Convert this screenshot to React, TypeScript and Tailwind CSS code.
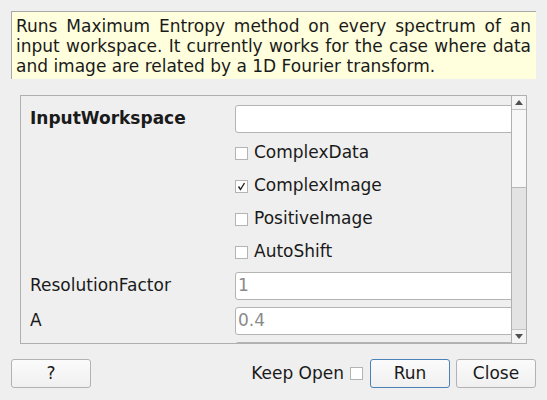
import React from "react";

const font = { fontFamily: '"DejaVu Sans", "Liberation Sans", sans-serif' };

function TextRow({ label, bold, value }: { label: string; bold?: boolean; value?: string }) {
  return (
    <div className="flex items-center h-[28px] shrink-0">
      <div className={`w-[205px] shrink-0 ${bold ? "font-bold" : ""}`}>{label}</div>
      <div className="h-[28px] w-[290px] shrink-0 bg-white border border-[#b4b4b4] rounded-[3px] flex items-center pl-[2px] text-[#8a8a8a]">
        {value}
      </div>
    </div>
  );
}

function CheckRow({ label, checked }: { label: string; checked?: boolean }) {
  return (
    <div className="flex items-center h-[26px] shrink-0">
      <div className="w-[205px] shrink-0" />
      <div className="w-[13px] h-[13px] bg-white border border-[#b4b4b4] flex items-center justify-center shrink-0">
        {checked && (
          <svg width="9" height="9" viewBox="0 0 9 9">
            <path d="M1.5 4.5 L3.5 7.5 L7.5 1" fill="none" stroke="#222" strokeWidth="1.4" />
          </svg>
        )}
      </div>
      <div className="ml-[6px]">{label}</div>
    </div>
  );
}

export default function App() {
  return (
    <div className="w-[547px] h-[400px] bg-[#efefef] text-[17px] text-[#1a1a1a] overflow-hidden relative" style={font}>
      <div className="pt-[11px] pl-[11px]">
        <div className="w-[525px] h-[68px] bg-[#ffffdd] border-t border-l border-[#a8a8a8] pt-[4px] pl-[4px] pr-[5px] leading-[20px] text-justify text-[17px]">
          Runs Maximum Entropy method on every spectrum of an input workspace. It currently works for the case where data and image are related by a 1D Fourier transform.
        </div>
      </div>
      <div className="mt-[16px] ml-[20px] w-[507px] h-[249px] border border-[#b0b0b0] flex overflow-hidden">
        <div className="flex-1 overflow-hidden pl-[9px] pt-[9px] flex flex-col gap-[7px]">
          <TextRow label="InputWorkspace" bold />
          <CheckRow label="ComplexData" />
          <CheckRow label="ComplexImage" checked />
          <CheckRow label="PositiveImage" />
          <CheckRow label="AutoShift" />
          <TextRow label="ResolutionFactor" value="1" />
          <TextRow label="A" value="0.4" />
          <TextRow label="" value="" />
        </div>
        <div className="w-[15px] shrink-0 border-l border-[#b0b0b0] flex flex-col bg-[#e3e3e3]">
          <div className="h-[14px] bg-[#f4f4f4] border-b border-[#c4c4c4] flex items-center justify-center">
            <svg width="8" height="5" viewBox="0 0 8 5"><path d="M0 5 L4 0 L8 5 Z" fill="#505050" /></svg>
          </div>
          <div className="h-[78px] bg-[#f7f7f7] border-b border-[#b8b8b8]" />
          <div className="flex-1" />
          <div className="h-[14px] bg-[#f4f4f4] border-t border-[#c4c4c4] flex items-center justify-center">
            <svg width="8" height="5" viewBox="0 0 8 5"><path d="M0 0 L8 0 L4 5 Z" fill="#505050" /></svg>
          </div>
        </div>
      </div>
      <div className="mt-[15px] px-[11px] flex items-center">
        <button className="w-[80px] h-[29px] rounded-[3px] border border-[#b2b2b2] bg-gradient-to-b from-[#fbfbfb] to-[#f0f0f0]">?</button>
        <div className="flex-1" />
        <span>Keep Open</span>
        <div className="ml-[6px] w-[13px] h-[13px] bg-white border border-[#b4b4b4]" />
        <button className="ml-[7px] w-[80px] h-[29px] rounded-[3px] border border-[#4a82b8] bg-gradient-to-b from-[#fbfbfb] to-[#f0f0f0]">Run</button>
        <button className="ml-[6px] w-[80px] h-[29px] rounded-[3px] border border-[#b2b2b2] bg-gradient-to-b from-[#fbfbfb] to-[#f0f0f0]">Close</button>
      </div>
    </div>
  );
}
